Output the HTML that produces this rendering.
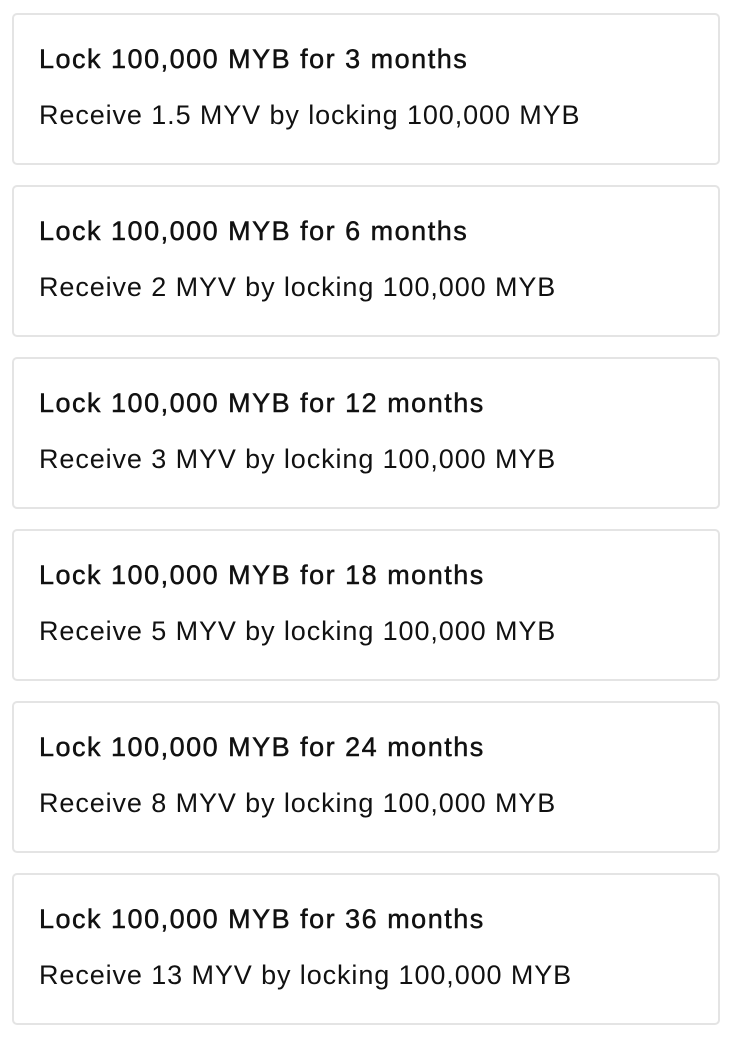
<!DOCTYPE html>
<html><head><style>
body{margin:0;background:#fff;width:734px;height:1038px;overflow:hidden;font-family:"Liberation Sans",sans-serif;color:#111;}
.card{position:absolute;left:12px;width:704px;height:148px;border:2px solid #e4e4e4;border-radius:5px;box-sizing:content-box;}
.t{position:absolute;left:25px;top:29px;font-size:27px;white-space:nowrap;line-height:30px;letter-spacing:1.5px;-webkit-text-stroke:0.5px #111;}
.s{position:absolute;left:25px;top:85px;font-size:27px;white-space:nowrap;line-height:30px;letter-spacing:0.9px;}
</style></head><body>
<div class="card" style="top:13px"><div class="t">Lock 100,000 MYB for 3 months</div><div class="s">Receive 1.5 MYV by locking 100,000 MYB</div></div>
<div class="card" style="top:185px"><div class="t">Lock 100,000 MYB for 6 months</div><div class="s">Receive 2 MYV by locking 100,000 MYB</div></div>
<div class="card" style="top:357px"><div class="t">Lock 100,000 MYB for 12 months</div><div class="s">Receive 3 MYV by locking 100,000 MYB</div></div>
<div class="card" style="top:529px"><div class="t">Lock 100,000 MYB for 18 months</div><div class="s">Receive 5 MYV by locking 100,000 MYB</div></div>
<div class="card" style="top:701px"><div class="t">Lock 100,000 MYB for 24 months</div><div class="s">Receive 8 MYV by locking 100,000 MYB</div></div>
<div class="card" style="top:873px"><div class="t">Lock 100,000 MYB for 36 months</div><div class="s">Receive 13 MYV by locking 100,000 MYB</div></div>
</body></html>
